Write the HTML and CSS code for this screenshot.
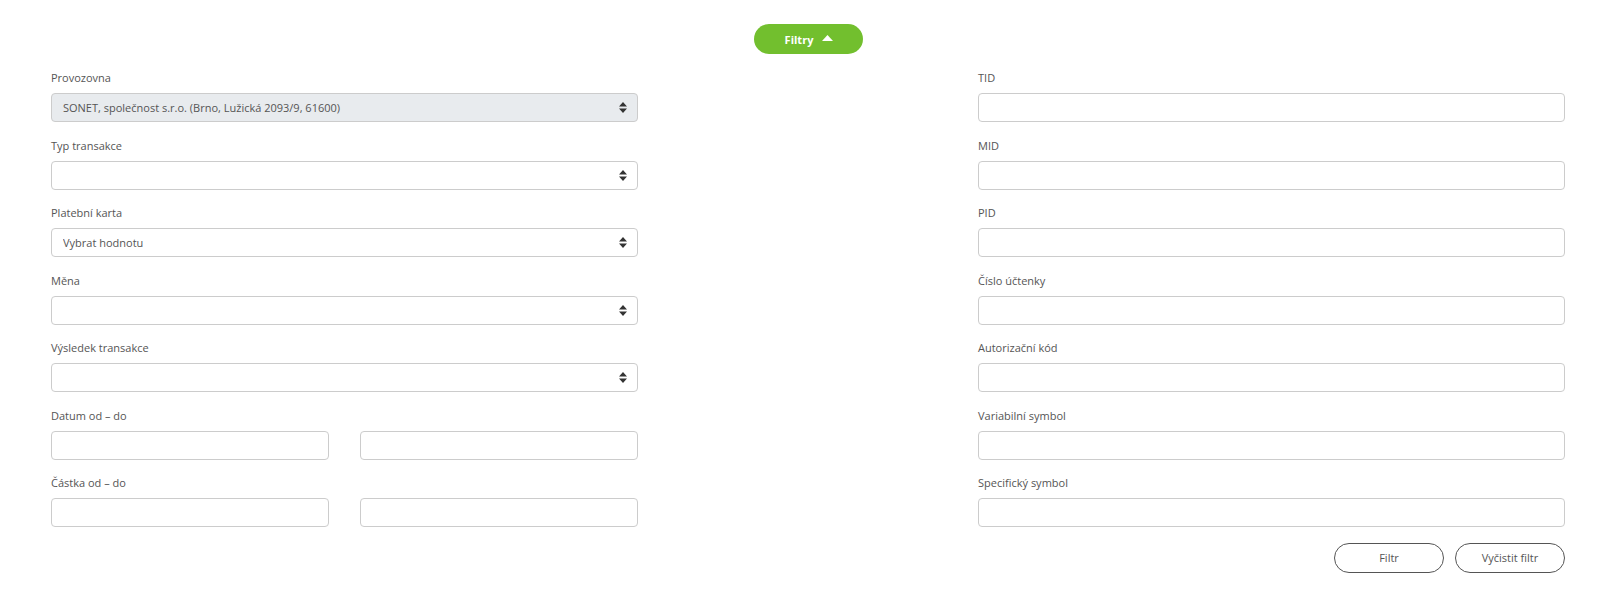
FILE: index.html
```html
<!DOCTYPE html>
<html lang="cs">
<head>
    <meta charset="UTF-8">
    <meta name="viewport" content="width=device-width, initial-scale=1.0">
    <title>Transakce - filtry</title>
    <link rel="stylesheet" href="styles.css">
</head>
<body>
    <div class="page">
        <div class="toggle-bar">
            <button class="btn-toggle" type="button">
                Filtry
                <svg class="caret" width="11" height="6" viewBox="0 0 11 6"><path d="M0 6 L5.5 0 L11 6 Z" fill="#fff"/></svg>
            </button>
        </div>

        <form class="filters">
            <div class="column">
                <div class="field">
                    <label>Provozovna</label>
                    <div class="select-wrap">
                        <select class="control" disabled>
                            <option>SONET, společnost s.r.o. (Brno, Lužická 2093/9, 61600)</option>
                        </select>
                        <svg class="arrows" width="8" height="11" viewBox="0 0 8 11"><path d="M4 0 L8 4.5 L0 4.5 Z M0 6.5 L8 6.5 L4 11 Z" fill="#333"/></svg>
                    </div>
                </div>
                <div class="field">
                    <label>Typ transakce</label>
                    <div class="select-wrap">
                        <select class="control"><option></option></select>
                        <svg class="arrows" width="8" height="11" viewBox="0 0 8 11"><path d="M4 0 L8 4.5 L0 4.5 Z M0 6.5 L8 6.5 L4 11 Z" fill="#333"/></svg>
                    </div>
                </div>
                <div class="field">
                    <label>Platební karta</label>
                    <div class="select-wrap">
                        <select class="control"><option>Vybrat hodnotu</option></select>
                        <svg class="arrows" width="8" height="11" viewBox="0 0 8 11"><path d="M4 0 L8 4.5 L0 4.5 Z M0 6.5 L8 6.5 L4 11 Z" fill="#333"/></svg>
                    </div>
                </div>
                <div class="field">
                    <label>Měna</label>
                    <div class="select-wrap">
                        <select class="control"><option></option></select>
                        <svg class="arrows" width="8" height="11" viewBox="0 0 8 11"><path d="M4 0 L8 4.5 L0 4.5 Z M0 6.5 L8 6.5 L4 11 Z" fill="#333"/></svg>
                    </div>
                </div>
                <div class="field">
                    <label>Výsledek transakce</label>
                    <div class="select-wrap">
                        <select class="control"><option></option></select>
                        <svg class="arrows" width="8" height="11" viewBox="0 0 8 11"><path d="M4 0 L8 4.5 L0 4.5 Z M0 6.5 L8 6.5 L4 11 Z" fill="#333"/></svg>
                    </div>
                </div>
                <div class="field">
                    <label>Datum od – do</label>
                    <div class="range">
                        <input class="control" type="text">
                        <input class="control" type="text">
                    </div>
                </div>
                <div class="field">
                    <label>Částka od – do</label>
                    <div class="range">
                        <input class="control" type="text">
                        <input class="control" type="text">
                    </div>
                </div>
            </div>

            <div class="column">
                <div class="field">
                    <label>TID</label>
                    <input class="control" type="text">
                </div>
                <div class="field">
                    <label>MID</label>
                    <input class="control" type="text">
                </div>
                <div class="field">
                    <label>PID</label>
                    <input class="control" type="text">
                </div>
                <div class="field">
                    <label>Číslo účtenky</label>
                    <input class="control" type="text">
                </div>
                <div class="field">
                    <label>Autorizační kód</label>
                    <input class="control" type="text">
                </div>
                <div class="field">
                    <label>Variabilní symbol</label>
                    <input class="control" type="text">
                </div>
                <div class="field">
                    <label>Specifický symbol</label>
                    <input class="control" type="text">
                </div>
                <div class="actions">
                    <button class="btn-outline" type="button">Filtr</button>
                    <button class="btn-outline" type="reset">Vyčistit filtr</button>
                </div>
            </div>
        </form>
    </div>
</body>
</html>
```

FILE: styles.css
```css
body, html {
    margin: 0;
    padding: 0;
    background: #fff;
    font-family: "Open Sans", Arial, sans-serif;
    font-size: 11px;
    color: #555;
}
.page {
    padding: 24px 0 0 51px;
}
.toggle-bar {
    width: 1514px;
    display: flex;
    justify-content: center;
    margin-bottom: 16px;
}
.btn-toggle {
    height: 30px;
    width: 109px;
    border: none;
    border-radius: 15px;
    background-color: #72bf2e;
    color: #fff;
    font-family: inherit;
    font-size: 11px;
    font-weight: 700;
    display: flex;
    align-items: center;
    justify-content: center;
    gap: 9px;
    padding: 0 0 0 2px;
    cursor: pointer;
}
.caret {
    margin-top: -2px;
}
.filters {
    display: grid;
    grid-template-columns: 587px 587px;
    column-gap: 340px;
}
.field {
    display: flex;
    flex-direction: column;
    margin-bottom: 15.5px;
}
.field label {
    line-height: 16px;
    margin-bottom: 7px;
    color: #555;
}
.control {
    box-sizing: border-box;
    width: 100%;
    height: 29px;
    border: 1px solid #ccc;
    border-radius: 4px;
    background-color: #fff;
    font-family: inherit;
    font-size: 11px;
    color: #555;
    padding: 0 11px;
    margin: 0;
    outline: none;
}
select.control {
    appearance: none;
    -webkit-appearance: none;
}
select.control:disabled {
    background-color: #e8ebee;
    opacity: 1;
    color: #555;
}
.select-wrap {
    position: relative;
}
.arrows {
    position: absolute;
    right: 11px;
    top: 9px;
    pointer-events: none;
}
.range {
    display: grid;
    grid-template-columns: 1fr 1fr;
    column-gap: 31px;
}
.actions {
    display: flex;
    justify-content: flex-end;
    gap: 11px;
}
.btn-outline {
    width: 110px;
    height: 30px;
    border: 1px solid #555;
    border-radius: 15px;
    background: #fff;
    color: #555;
    font-family: inherit;
    font-size: 11px;
    cursor: pointer;
}
```
